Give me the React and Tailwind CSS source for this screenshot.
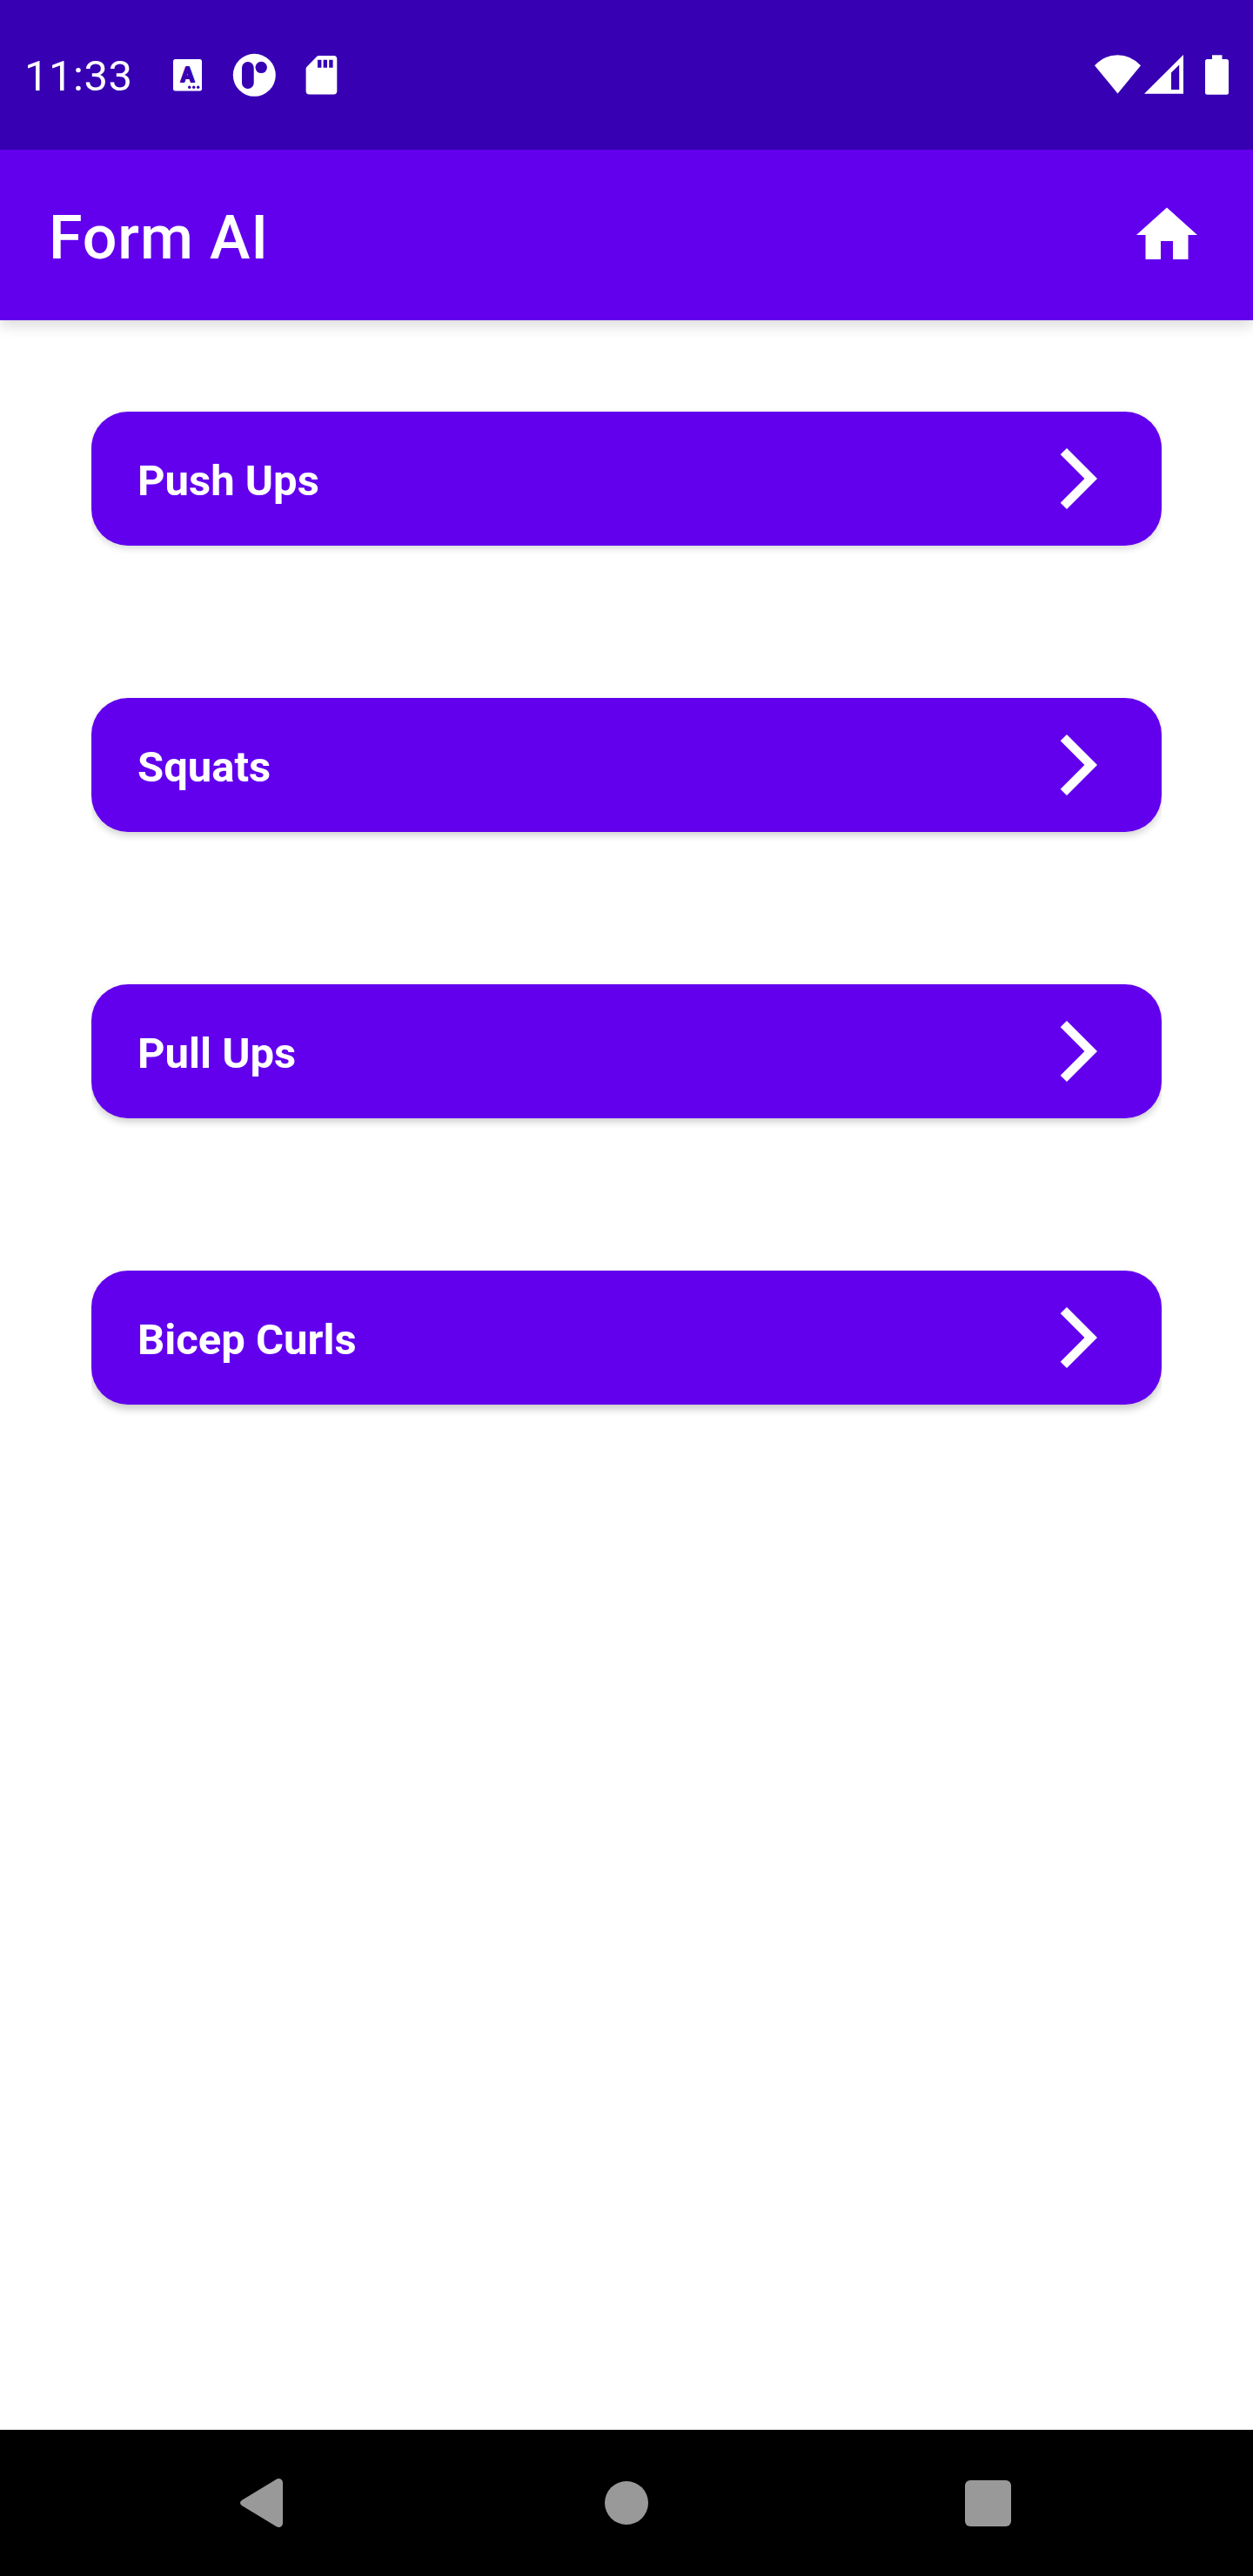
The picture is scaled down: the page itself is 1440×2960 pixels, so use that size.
const exercises = [
  { name: "Push Ups", shadow: "shadow-[0_3px_8px_rgba(0,0,0,0.16)]" },
  { name: "Squats", shadow: "shadow-[0_4px_8px_rgba(0,0,0,0.18)]" },
  { name: "Pull Ups", shadow: "shadow-[0_4px_9px_rgba(0,0,0,0.2)]" },
  { name: "Bicep Curls", shadow: "shadow-[0_5px_10px_rgba(0,0,0,0.22)]" },
];

function KeyboardIcon() {
  return (
    <svg className="ml-[46px] h-[46px] w-[42px]" viewBox="195 63 42 46" fill="#fff">
      <rect x="199" y="68" width="33" height="36.5" rx="2.5" />
      <text x="215.5" y="94" textAnchor="middle" fontFamily="Roboto, sans-serif" fontWeight="700" fontSize="23" fill="#3700b3" stroke="#3700b3" strokeWidth="2" strokeLinejoin="round">A</text>
      <g fill="#3700b3">
        <circle cx="217.7" cy="100.3" r="1.7" />
        <circle cx="222.7" cy="100.3" r="1.7" />
        <circle cx="227.7" cy="100.3" r="1.7" />
      </g>
    </svg>
  );
}

function AppBadgeIcon() {
  return (
    <svg className="ml-[30px] h-[50px] w-[50px]" viewBox="267 61 50 50" fill="#fff">
      <circle cx="292.3" cy="86.3" r="24.5" />
      <rect x="278" y="71" width="13.7" height="31" rx="6.8" fill="#3700b3" />
      <circle cx="300.2" cy="77.4" r="6.7" fill="#3700b3" />
    </svg>
  );
}

function SdCardIcon() {
  return (
    <svg className="ml-[33px] h-[46px] w-[38px]" viewBox="350 63 38 46">
      <path
        fill="#fff"
        fillRule="evenodd"
        d="M366.5 64H383.5Q387.3 64 387.3 68V104.5Q387.3 108.5 383.5 108.5H355.5Q351.6 108.5 351.6 104.5V79Q351.6 77.5 352.8 76.4L364 65Q365 64 366.5 64ZM365 68.7V77.7H369.4V68.7ZM371.6 68.7V77.7H376V68.7ZM378.2 68.7V77.7H382.6V68.7Z"
      />
    </svg>
  );
}

function WifiIcon() {
  return (
    <svg className="h-[46px] w-[54px]" viewBox="1258 63 54 46" fill="#fff">
      <path d="M1284.5 107.6L1258 75.2Q1269.5 63.2 1284.5 63.2Q1299.5 63.2 1311 75.2Z" />
    </svg>
  );
}

function SignalIcon() {
  return (
    <svg className="ml-[2px] h-[46px] w-[47px]" viewBox="1314 63 47 46" fill="#fff">
      <path fillRule="evenodd" d="M1315 107.8L1360 63V107.8ZM1346 83.5V103H1355.2V74.5Z" />
    </svg>
  );
}

function BatteryIcon() {
  return (
    <svg className="ml-[23px] h-[46px] w-[29px]" viewBox="1384 63 29 46" fill="#fff">
      <rect x="1393" y="63.3" width="11.5" height="8" />
      <rect x="1385" y="68" width="27" height="40.7" rx="2.5" />
    </svg>
  );
}

function StatusBar() {
  return (
    <header className="flex h-[172px] items-center justify-between bg-[#3700b3] pr-[27px] pl-[28px]">
      <div className="flex items-center">
        <span className="w-[121px] pt-1 text-[49px] leading-[56px] tracking-[0.5px] whitespace-nowrap">11:33</span>
        <KeyboardIcon />
        <AppBadgeIcon />
        <SdCardIcon />
      </div>
      <div className="flex items-center">
        <WifiIcon />
        <SignalIcon />
        <BatteryIcon />
      </div>
    </header>
  );
}

function AppBar() {
  return (
    <div className="flex h-[196px] items-center justify-between bg-[#6200ee] pr-[57px] pl-[56px] shadow-[0_6px_16px_rgba(0,0,0,0.15)]">
      <h1 className="pt-1.5 text-[70px] leading-[82px] font-medium tracking-[0.875px]">Form AI</h1>
      <button aria-label="Home" className="size-[84px]">
        <svg viewBox="0 0 24 24" className="size-[84px]" fill="#fff">
          <path d="M10 20v-6h4v6h5v-8h3L12 3 2 12h3v8z" />
        </svg>
      </button>
    </div>
  );
}

function ExerciseButton({ name, shadow }) {
  return (
    <button className={`flex h-[154px] w-full items-center justify-between rounded-[42px] bg-[#6200ee] pr-[73px] pl-[53px] ${shadow}`}>
      <span className="pt-1 text-[49px] leading-[57px] font-bold">{name}</span>
      <svg className="h-[72px] w-[44px]" viewBox="0 0 44 72" fill="#fff">
        <path d="M8 1L43 36L8 71L0.7 63.7L28.4 36L0.7 8.3Z" />
      </svg>
    </button>
  );
}

function NavigationBar() {
  return (
    <nav className="flex h-[168px] items-center justify-between bg-black pr-[278px] pl-[275px]">
      <svg className="h-[58px] w-[51px]" viewBox="0 0 51 58" fill="#999">
        <path d="M2.8 26L42.8 1.7Q45 0.4 47.5 1.5Q50 2.8 50 5.5V52.5Q50 55.2 47.5 56.5Q45 57.6 42.8 56.3L2.8 32Q-0.8 29 2.8 26Z" />
      </svg>
      <span className="ml-[5px] size-[50px] rounded-full bg-[#999]" />
      <span className="size-[53px] rounded-[6px] bg-[#999]" />
    </nav>
  );
}

export default function App() {
  return (
    <div className="flex h-[2960px] w-[1440px] flex-col bg-white font-['Roboto',sans-serif] text-white">
      <StatusBar />
      <AppBar />
      <main className="mx-[105px] flex flex-1 flex-col gap-[175px] pt-[105px] [clip-path:inset(0)]">
        {exercises.map((exercise) => (
          <ExerciseButton key={exercise.name} {...exercise} />
        ))}
      </main>
      <NavigationBar />
    </div>
  );
}
